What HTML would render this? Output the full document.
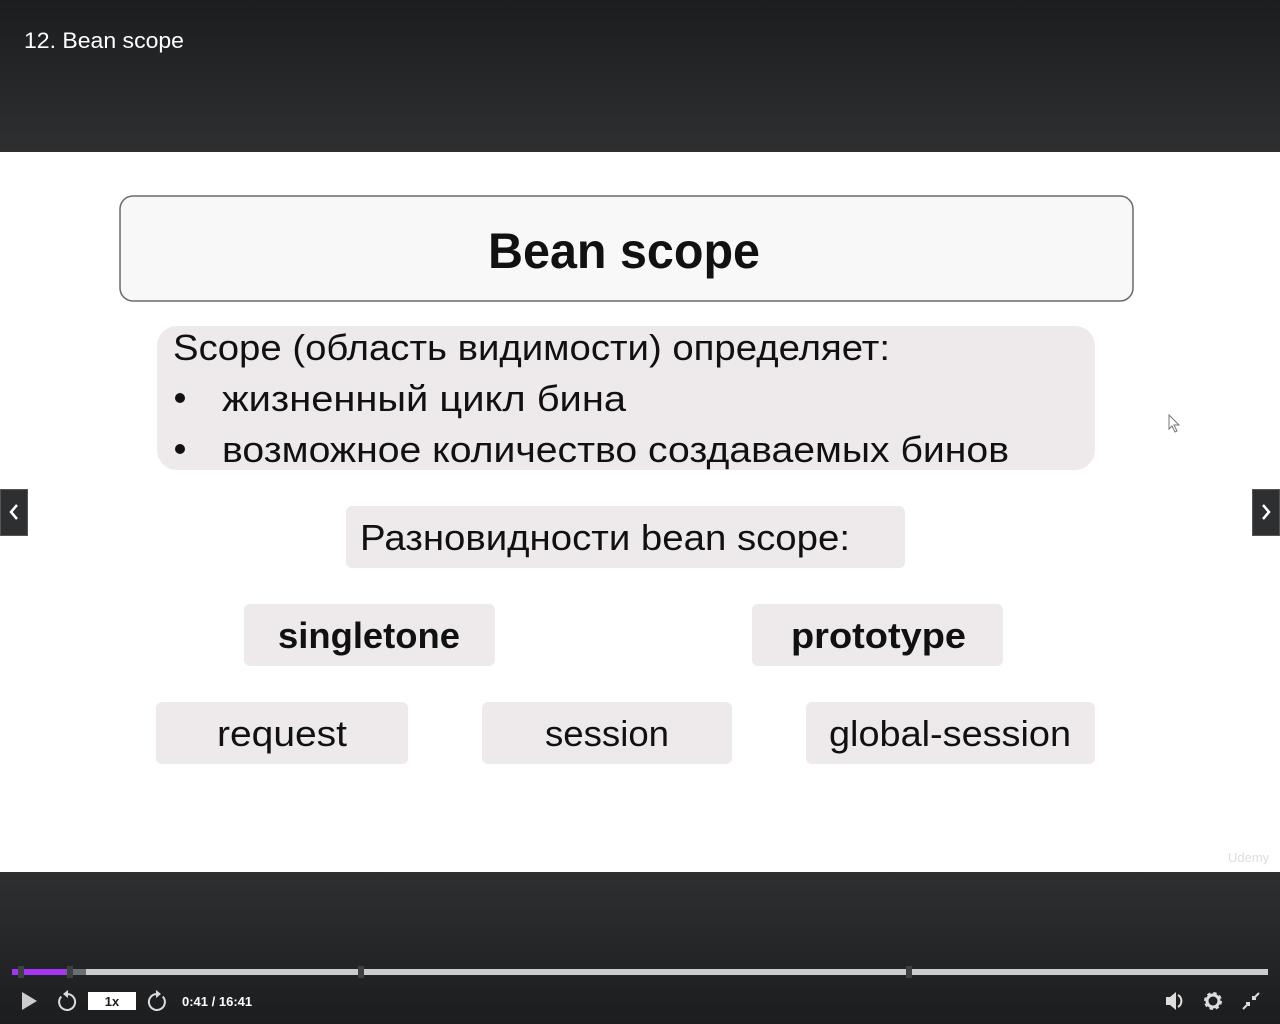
<!DOCTYPE html>
<html><head><meta charset="utf-8"><style>
*{margin:0;padding:0;box-sizing:border-box}
body{width:1280px;height:1024px;overflow:hidden;background:#2d2f31;font-family:"Liberation Sans",sans-serif;position:relative}
.top{position:absolute;left:0;top:0;width:1280px;height:152px;background:linear-gradient(#1c1d1f,#2d2f31)}
.slide{position:absolute;left:0;top:152px;width:1280px;height:720px;background:#fff}
.bot{position:absolute;left:0;top:872px;width:1280px;height:152px;background:linear-gradient(#2d2f31,#1c1d1f)}
.nav{position:absolute;top:489px;width:28px;height:47px;background:#2d2f31;border:1px solid #555}
</style></head><body>
<div class="top"></div>
<div class="slide"></div>
<div class="bot"></div>
<svg style="position:absolute;left:0;top:0" width="1280" height="1024" font-family="Liberation Sans, sans-serif">
<text x="24" y="48" font-size="22" fill="#fff" textLength="160" lengthAdjust="spacingAndGlyphs">12. Bean scope</text>
<rect x="120" y="196" width="1013" height="105" rx="13" fill="#f8f8f8" stroke="#6a6a6a" stroke-width="1.5"/>
<text x="488" y="268" font-size="50" font-weight="bold" textLength="272" lengthAdjust="spacingAndGlyphs" fill="#111">Bean scope</text>
<g fill="#eeeaeb">
<rect x="157" y="326" width="938" height="144" rx="20"/>
<rect x="346" y="506" width="559" height="62" rx="6"/>
<rect x="244" y="604" width="251" height="62" rx="6"/>
<rect x="752" y="604" width="251" height="62" rx="6"/>
<rect x="156" y="702" width="252" height="62" rx="6"/>
<rect x="482" y="702" width="250" height="62" rx="6"/>
<rect x="806" y="702" width="289" height="62" rx="6"/>
</g>
<g fill="#111" font-size="36">
<text x="173" y="360" textLength="717" lengthAdjust="spacingAndGlyphs">Scope (область видимости) определяет:</text>
<circle cx="180" cy="398" r="5"/><circle cx="180" cy="449" r="5"/>
<text x="222" y="411" textLength="404" lengthAdjust="spacingAndGlyphs">жизненный цикл бина</text>
<text x="222" y="462" textLength="787" lengthAdjust="spacingAndGlyphs">возможное количество создаваемых бинов</text>
<text x="360" y="550" textLength="490" lengthAdjust="spacingAndGlyphs">Разновидности bean scope:</text>
<text x="278" y="648" font-weight="bold" textLength="182" lengthAdjust="spacingAndGlyphs">singletone</text>
<text x="791" y="648" font-weight="bold" textLength="175" lengthAdjust="spacingAndGlyphs">prototype</text>
<text x="217" y="746" textLength="130" lengthAdjust="spacingAndGlyphs">request</text>
<text x="545" y="746" textLength="124" lengthAdjust="spacingAndGlyphs">session</text>
<text x="829" y="746" textLength="242" lengthAdjust="spacingAndGlyphs">global-session</text>
</g>
<text x="1228" y="862" font-size="13" fill="#ddd">Udemy</text>
<path d="M1169 415 L1169 429 L1172 426 L1175 432 L1177 431 L1174 425 L1179 425 Z" fill="#fff" stroke="#777" stroke-width="1"/>
<rect x="12" y="969" width="346" height="6" fill="#cccccc"/>
<rect x="364" y="969" width="542" height="6" fill="#cccccc"/>
<rect x="912" y="969" width="356" height="6" fill="#cccccc"/>
<rect x="66" y="969" width="20" height="6" fill="#6a6f73"/>
<rect x="12" y="969" width="54" height="6" fill="#a435f0"/>
<rect x="18" y="966" width="6" height="12" fill="#3e4143"/>
<rect x="67" y="966" width="6" height="12" fill="#3e4143"/>
<rect x="358" y="966" width="6" height="12" fill="#3e4143"/>
<rect x="906" y="966" width="6" height="12" fill="#3e4143"/>
<path d="M22 992 L37 1001 L22 1010 Z" fill="#ccc"/>
<path d="M61.3 996.5 A8 8 0 1 0 67 994" fill="none" stroke="#ddd" stroke-width="2"/>
<path d="M63 994 L68 990 L68 998 Z" fill="#ddd"/>
<rect x="88" y="992" width="48" height="18" fill="#fff"/>
<text x="112" y="1006" font-size="13" font-weight="bold" text-anchor="middle" fill="#1c1d1f">1x</text>
<path d="M162.7 996.5 A8 8 0 1 1 157 994" fill="none" stroke="#ddd" stroke-width="2"/>
<path d="M161 994 L156 990 L156 998 Z" fill="#ddd"/>
<text x="182" y="1006" font-size="13" font-weight="bold" fill="#fff">0:41 / 16:41</text>
<path d="M1166 997 L1170 997 L1176 992 L1176 1010 L1170 1005 L1166 1005 Z" fill="#ddd"/>
<path d="M1178 995 A7 7 0 0 1 1178 1007" fill="none" stroke="#ddd" stroke-width="2"/>
<circle cx="1213" cy="1001" r="7" fill="none" stroke="#ddd" stroke-width="4" stroke-dasharray="3 2.5"/>
<circle cx="1213" cy="1001" r="6" fill="none" stroke="#ddd" stroke-width="3"/>
<path d="M1243 1009 L1249 1003 M1246 1003 L1249 1003 L1249 1006 M1259 993 L1253 999 M1253 996 L1253 999 L1256 999" stroke="#ddd" stroke-width="2" fill="none"/>
</svg>
<div class="nav" style="left:0"></div>
<div class="nav" style="left:1252px"></div>
<svg style="position:absolute;left:0;top:0" width="1280" height="1024">
<path d="M17 505 L11 512 L17 519" stroke="#fff" stroke-width="2.5" fill="none"/>
<path d="M1263 505 L1269 512 L1263 519" stroke="#fff" stroke-width="2.5" fill="none"/>
</svg>
</body></html>
